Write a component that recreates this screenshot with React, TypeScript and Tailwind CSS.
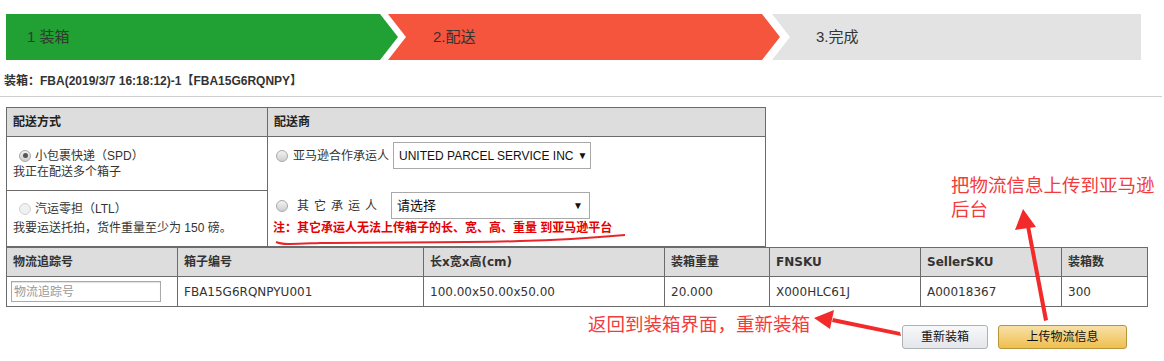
import React from 'react';

const cjk = "font-['Liberation_Sans','Noto_Sans_CJK_SC',sans-serif]";
const verd = "font-['DejaVu_Sans','Noto_Sans_CJK_SC',sans-serif]";

const Radio: React.FC<{ checked?: boolean; faded?: boolean }> = ({ checked, faded }) => (
  <span
    className={`inline-flex items-center justify-center w-[12px] h-[12px] rounded-full border shrink-0 ${
      faded ? 'border-[#d4d4d4] bg-[#f0f0f0]' : 'border-[#a9a9a9] bg-gradient-to-b from-[#f2f2f2] to-[#cfcfcf]'
    }`}
  >
    {checked && <span className="w-[5px] h-[5px] rounded-full bg-[#555]" />}
  </span>
);

const Steps: React.FC = () => (
  <div className={`flex ml-[6px] pt-[14px] ${cjk}`}>
    <div className="w-[392px] h-[46px] bg-[#21a033] flex items-center pl-[21px] text-[15px] text-[#2f3b2f] [clip-path:polygon(0_0,374px_0,392px_50%,374px_100%,0_100%)]">
      1 装箱
    </div>
    <div className="w-[392px] h-[46px] -ml-[10px] bg-[#f5543d] flex items-center pl-[45px] text-[15px] text-[#333] [clip-path:polygon(0_0,374px_0,392px_50%,374px_100%,0_100%,18px_50%)]">
      2.配送
    </div>
    <div className="w-[369px] h-[46px] -ml-[8px] bg-[#e3e3e3] flex items-center pl-[44px] text-[15px] text-[#333] [clip-path:polygon(0_0,100%_0,100%_100%,0_100%,18px_50%)]">
      3.完成
    </div>
  </div>
);

const Annotations: React.FC = () => (
  <>
    <svg className="absolute left-0 top-0 pointer-events-none" width="1164" height="361" viewBox="0 0 1164 361">
      <path d="M276 242 C282 245 295 244 320 243 C380 242 470 243 520 241 C560 240 590 238 625 235" fill="none" stroke="#e8262a" strokeWidth="2" />
      <polygon points="1044,321 1048,320 1030,226 1026,226" fill="#f22a2a" />
      <polygon points="1023,209 1015,230 1036,227" fill="#f22a2a" />
      <polygon points="900,332 901,336 832,322 833,318" fill="#f22a2a" />
      <polygon points="814,318 834,310 830,329" fill="#f22a2a" />
    </svg>
    <div className={`absolute left-[951px] top-[174px] text-[18.5px] leading-[24px] text-[#f23b3b] whitespace-nowrap ${cjk}`}>
      把物流信息上传到亚马逊
      <br />
      后台
    </div>
    <div className={`absolute left-[588px] top-[313px] text-[18.5px] leading-[24px] text-[#f23b3b] whitespace-nowrap ${cjk}`}>
      返回到装箱界面，重新装箱
    </div>
  </>
);

const App: React.FC = () => {
  const th = 'border border-[#6b6b6b] bg-[#dddddd] text-left font-bold px-[6px] h-[29px]';
  const td = 'border border-[#6b6b6b] px-[6px]';
  return (
    <div className="relative w-[1164px] h-[361px] bg-white overflow-hidden text-[#333]">
      <Steps />

      <div className={`ml-[4px] mt-[12px] h-[18px] leading-[18px] text-[12px] font-semibold text-[#333] ${cjk}`}>
        装箱：FBA(2019/3/7 16:18:12)-1【FBA15G6RQNPY】
      </div>
      <div className="mt-[6px] w-[1162px] border-t border-[#cfcfcf]" />

      {/* 配送方式 / 配送商 */}
      <table className={`ml-[6px] mt-[10px] w-[760px] table-fixed border-collapse text-[12px] ${cjk}`}>
        <colgroup>
          <col className="w-[261px]" />
          <col />
        </colgroup>
        <thead>
          <tr>
            <th className={`${th} text-[#222]`}>配送方式</th>
            <th className={`${th} text-[#222]`}>配送商</th>
          </tr>
        </thead>
        <tbody>
          <tr className="h-[54px]">
            <td className={`${td} align-middle`}>
              <div className="flex items-center gap-[4px] pl-[6px] leading-[16px]">
                <Radio checked />
                <span className="text-[#333]">小包裹快递（SPD）</span>
              </div>
              <div className="leading-[16px] text-[#333]">我正在配送多个箱子</div>
            </td>
            <td className={`${td} align-top pt-[5px] pl-[8px]`} rowSpan={2}>
              <div className="flex items-center h-[27px]">
                <Radio />
                <span className="ml-[5px] text-[#333]">亚马逊合作承运人</span>
                <div className="ml-[4px] w-[198px] h-[27px] border border-[#a9a9a9] flex items-center pl-[5px] text-[12px] text-[#111] whitespace-nowrap font-['Liberation_Sans',sans-serif]">
                  UNITED PARCEL SERVICE INC <span className="ml-[4px] text-[10px]">▼</span>
                </div>
              </div>
              <div className="flex items-center h-[27px] mt-[23px]">
                <Radio />
                <span className="ml-[9px] tracking-[5px] text-[#333]">其它承运人</span>
                <div className="ml-[9px] w-[199px] h-[27px] border border-[#a9a9a9] flex items-center justify-between pl-[5px] pr-[6px] text-[13px] text-[#111]">
                  <span>请选择</span>
                  <span className="text-[10px]">▼</span>
                </div>
              </div>
              <div className="-ml-[3px] mt-[1px] leading-[16px] font-bold text-[#e60000]">
                注：其它承运人无法上传箱子的长、宽、高、重量 到亚马逊平台
              </div>
            </td>
          </tr>
          <tr className="h-[56px]">
            <td className={`${td} align-middle`}>
              <div className="flex items-center gap-[4px] pl-[6px] leading-[19px]">
                <Radio faded />
                <span className="text-[#333]">汽运零担（LTL）</span>
              </div>
              <div className="leading-[19px] text-[#333]">我要运送托拍，货件重量至少为 150 磅。</div>
            </td>
          </tr>
        </tbody>
      </table>

      {/* 箱子明细 */}
      <table className={`ml-[6px] w-[1141px] table-fixed border-collapse text-[12px] ${verd}`}>
        <colgroup>
          <col className="w-[171px]" />
          <col className="w-[246px]" />
          <col className="w-[241px]" />
          <col className="w-[105px]" />
          <col className="w-[151px]" />
          <col className="w-[141px]" />
          <col className="w-[86px]" />
        </colgroup>
        <thead>
          <tr>
            <th className={th}>物流追踪号</th>
            <th className={th}>箱子编号</th>
            <th className={th}>长x宽x高(cm)</th>
            <th className={th}>装箱重量</th>
            <th className={th}>FNSKU</th>
            <th className={th}>SellerSKU</th>
            <th className={th}>装箱数</th>
          </tr>
        </thead>
        <tbody>
          <tr className="h-[30px]">
            <td className="border border-[#6b6b6b] px-[4px]">
              <div className={`w-[150px] h-[21px] border border-[#a9a9a9] shadow-[inset_0_1px_1px_rgba(0,0,0,0.12)] flex items-center pl-[2px] text-[12px] text-[#999] ${cjk}`}>
                物流追踪号
              </div>
            </td>
            <td className={td}>FBA15G6RQNPYU001</td>
            <td className={td}>100.00x50.00x50.00</td>
            <td className={td}>20.000</td>
            <td className={td}>X000HLC61J</td>
            <td className={td}>A00018367</td>
            <td className={td}>300</td>
          </tr>
        </tbody>
      </table>

      <div className={`flex mt-[18px] ml-[902px] gap-[10px] text-[12px] text-[#111] ${cjk}`}>
        <button className="w-[86px] h-[24px] rounded-[3px] border border-[#adb1b8] bg-gradient-to-b from-[#f7f8fa] to-[#e4e6ea]">
          重新装箱
        </button>
        <button className="w-[129px] h-[24px] rounded-[3px] border border-[#b9943f] bg-gradient-to-b from-[#f7e0a6] to-[#efbf4a]">
          上传物流信息
        </button>
      </div>

      <Annotations />
    </div>
  );
};

export default App;
